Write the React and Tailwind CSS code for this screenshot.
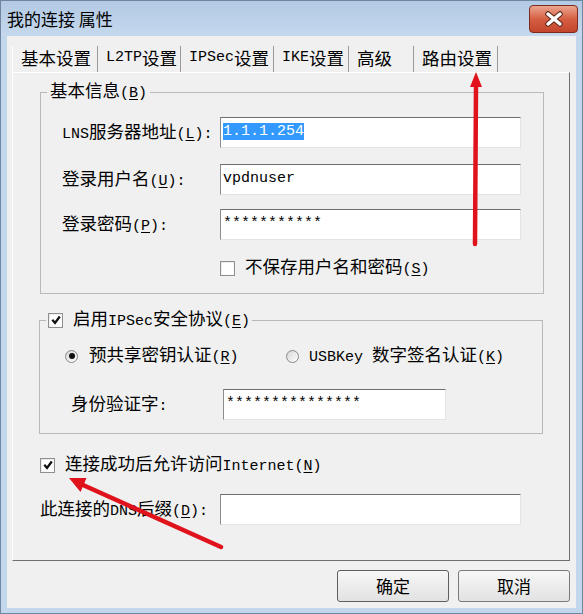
import React from "react";

const MONO = "font-['Liberation_Mono',monospace] text-[15px]";

// split text into latin runs (mono) and CJK runs
function mix(s) {
  return s
    .split(/([\x20-\x7e]+)/)
    .filter(Boolean)
    .map((p, i) =>
      /^[\x20-\x7e]+$/.test(p) ? (
        <span key={i} className={MONO}>
          {p}
        </span>
      ) : (
        <span key={i}>{p}</span>
      )
    );
}

function Label({ a, k, b = "" }) {
  return (
    <span className="whitespace-nowrap">
      {mix(a)}
      <span className={MONO + " underline underline-offset-2 decoration-1"}>{k}</span>
      {mix(b)}
    </span>
  );
}

function CheckBox({ checked }) {
  return (
    <span className="w-[15px] h-[15px] shrink-0 border border-[#8f8f8f] bg-gradient-to-br from-[#e6e6e6] to-white flex items-center justify-center">
      <span className="w-[11px] h-[11px] bg-white flex items-center justify-center">
        {checked && (
          <svg width="10" height="10" viewBox="0 0 10 10">
            <path d="M1.3 4.8 L4 7.9 L8.8 1.5" fill="none" stroke="#111" strokeWidth="2.3" />
          </svg>
        )}
      </span>
    </span>
  );
}

function Radio({ checked }) {
  return (
    <span className="w-[13px] h-[13px] shrink-0 rounded-full border border-[#8a8a8a] bg-gradient-to-br from-[#d6d6d6] to-white flex items-center justify-center">
      {checked && <span className="w-[6px] h-[6px] rounded-full bg-[#111]" />}
    </span>
  );
}

function Input({ className, children }) {
  return (
    <div
      className={
        "h-[31px] bg-white border border-t-[#6e6e6e] border-l-[#8c8c8c] border-r-[#e3e3e3] border-b-[#e3e3e3] pl-[2px] leading-[20px] " +
        className
      }
    >
      {children}
    </div>
  );
}

const tabs = [
  { t: "基本设置", w: "w-[86px]" },
  { t: "L2TP设置", w: "w-[83px]" },
  { t: "IPSec设置", w: "w-[93px]" },
  { t: "IKE设置", w: "w-[75px]" },
  { t: "高级", w: "w-[65px]" },
  { t: "路由设置", w: "w-[84px]" },
];

export default function App() {
  return (
    <div className="relative w-[583px] h-[614px] flex flex-col bg-[#c2d6ec] border border-[#6f86a0] overflow-hidden text-black font-['Noto_Sans_CJK_SC',sans-serif] text-[17.5px]">
      {/* title bar */}
      <div className="h-[35px] flex items-start justify-between pl-[6px] pr-[4px] bg-gradient-to-b from-[#b2cae4] to-[#c5d8ed]">
        <div className="pt-[8px] leading-[20px] text-[17px]">我的连接 属性</div>
        <div className="mt-[4px] w-[49px] h-[28px] rounded-[4px] border border-[#7e2a1c] bg-gradient-to-b from-[#e9a58f] via-[#d55e42] to-[#c3452c] flex items-center justify-center">
          <svg width="20" height="16" viewBox="0 0 20 16">
            <path d="M4 3 L16 13 M16 3 L4 13" stroke="#5b2418" strokeWidth="5.5" strokeLinecap="round" />
            <path d="M4 3 L16 13 M16 3 L4 13" stroke="#fff" strokeWidth="3.5" strokeLinecap="round" />
          </svg>
        </div>
      </div>

      {/* client area */}
      <div className="flex-1 mx-[6px] mb-[5px] bg-[#f0f0f0] flex flex-col">
        {/* tabs */}
        <div className="flex mt-[10px] ml-[5px] h-[26px] items-stretch">
          {tabs.map((tab, i) => (
            <div
              key={tab.t}
              className={
                "flex items-center leading-[20px] pl-[8px] pb-[2px] border-r border-[#9a9a9a] " +
                tab.w +
                (i === 0 ? " border-l border-l-white" : "")
              }
            >
              {mix(tab.t)}
            </div>
          ))}
        </div>

        {/* panel */}
        <div className="ml-[5px] w-[558px] h-[489px] border border-t-white border-l-white border-r-[#6f6f6f] border-b-[#6f6f6f] flex flex-col">
          {/* 基本信息 */}
          <fieldset className="ml-[27px] mt-[7px] w-[504px] border border-[#b9b9b9]">
            <legend className="ml-[6px] px-[3px] leading-[20px]">
              <Label a="基本信息(" k="B" b=")" />
            </legend>
            <div className="pl-[21px] pt-[13px] pb-[15px]">
              <div className="flex items-center h-[31px]">
                <div className="w-[158px]">
                  <Label a="LNS服务器地址(" k="L" b="):" />
                </div>
                <Input className="w-[301px]">
                  <span className={MONO + " bg-[#3399ff] text-white inline-block leading-[17px] mt-[1px]"}>1.1.1.254</span>
                </Input>
              </div>
              <div className="flex items-center h-[31px] mt-[16px]">
                <div className="w-[158px]">
                  <Label a="登录用户名(" k="U" b="):" />
                </div>
                <Input className="w-[301px]">
                  <span className={MONO}>vpdnuser</span>
                </Input>
              </div>
              <div className="flex items-center h-[31px] mt-[14px]">
                <div className="w-[158px]">
                  <Label a="登录密码(" k="P" b="):" />
                </div>
                <Input className="w-[301px]">
                  <span className={MONO}>***********</span>
                </Input>
              </div>
              <div className="flex items-center gap-[10px] h-[20px] mt-[18px] pl-[158px] leading-[20px]">
                <CheckBox />
                <Label a="不保存用户名和密码(" k="S" b=")" />
              </div>
            </div>
          </fieldset>

          {/* IPSec */}
          <fieldset className="ml-[26px] mt-[14px] w-[504px] border border-[#b9b9b9]">
            <legend className="ml-[6px] px-[2px] leading-[20px]">
              <span className="flex items-center gap-[10px]">
                <CheckBox checked />
                <Label a="启用IPSec安全协议(" k="E" b=")" />
              </span>
            </legend>
            <div className="pl-[25px] pt-[14px] pb-[13px]">
              <div className="flex items-center h-[20px] leading-[20px]">
                <div className="w-[221px] flex items-center gap-[11px]">
                  <Radio checked />
                  <Label a="预共享密钥认证(" k="R" b=")" />
                </div>
                <div className="flex items-center gap-[10px]">
                  <Radio />
                  <Label a="USBKey 数字签名认证(" k="K" b=")" />
                </div>
              </div>
              <div className="flex items-center h-[31px] mt-[23px] pl-[6px]">
                <div className="w-[152px]">{mix("身份验证字:")}</div>
                <Input className="w-[223px]">
                  <span className={MONO}>***************</span>
                </Input>
              </div>
            </div>
          </fieldset>

          <div className="flex items-center gap-[10px] h-[20px] mt-[21px] ml-[27px] leading-[20px]">
            <CheckBox checked />
            <Label a="连接成功后允许访问Internet(" k="N" b=")" />
          </div>

          <div className="flex items-center h-[31px] mt-[19px] ml-[27px]">
            <div className="w-[180px]">
              <Label a="此连接的DNS后缀(" k="D" b="):" />
            </div>
            <Input className="w-[301px]" />
          </div>
        </div>

        {/* buttons */}
        <div className="flex justify-end gap-[9px] mt-[9px] pr-[6px]">
          <button className="w-[112px] h-[32px] rounded-[3px] border border-[#5e5e5e] bg-gradient-to-b from-[#f7f7f7] to-[#e2e2e2] text-[17px] leading-[20px]">
            确定
          </button>
          <button className="w-[112px] h-[32px] rounded-[3px] border border-[#7a7a7a] bg-gradient-to-b from-[#f7f7f7] to-[#e2e2e2] text-[17px] leading-[20px]">
            取消
          </button>
        </div>
      </div>

      {/* red annotation arrows */}
      <svg className="absolute inset-0 pointer-events-none" width="583" height="614" viewBox="0 0 583 614">
        <path d="M474 243 L475 84" stroke="#e0121c" strokeWidth="4.5" strokeLinecap="round" />
        <polygon points="475,71 469,86 481,86" fill="#e0121c" />
        <path d="M220 546 L82 484" stroke="#e0121c" strokeWidth="4.5" strokeLinecap="round" />
        <polygon points="68,477 85.5,477 79.5,491" fill="#e0121c" />
      </svg>
    </div>
  );
}
